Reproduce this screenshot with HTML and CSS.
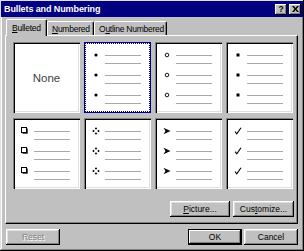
FILE: index.html
```html
<!DOCTYPE html>
<html>
<head>
<meta charset="utf-8">
<link rel="stylesheet" href="styles.css">
</head>
<body>
<div class="window">
  <div class="titlebar">
    <span class="title">Bullets and Numbering</span>
    <div class="tbtns">
      <span class="tbtn help">?</span>
      <span class="tbtn close"><svg width="7" height="6" viewBox="0 0 7 6"><path d="M0 0h2l1.5 2 1.5-2h2L4.5 3 7 6H5L3.5 4 2 6H0l2.5-3z" fill="#000"/></svg></span>
    </div>
  </div>
  <div class="content">
    <div class="tabs">
      <div class="tab sel"><span class="u">B</span>ulleted</div>
      <div class="tab t2"><span class="u">N</span>umbered</div>
      <div class="tab t3">O<span class="u">u</span>tline Numbered</div>
    </div>
    <div class="panel">
      <div class="grid">
        <div class="cell none">None</div>
        <div class="cell selected">
          <div class="item"><svg class="b" width="8" height="8"><circle cx="4" cy="4" r="1.6" fill="#000"/></svg><div class="lines"><i></i><i></i></div></div>
          <div class="item"><svg class="b" width="8" height="8"><circle cx="4" cy="4" r="1.6" fill="#000"/></svg><div class="lines"><i></i><i></i></div></div>
          <div class="item"><svg class="b" width="8" height="8"><circle cx="4" cy="4" r="1.6" fill="#000"/></svg><div class="lines"><i></i><i></i></div></div>
        </div>
        <div class="cell">
          <div class="item"><svg class="b" width="8" height="8"><circle cx="4" cy="4" r="1.8" fill="none" stroke="#000" stroke-width="0.9"/></svg><div class="lines"><i></i><i></i></div></div>
          <div class="item"><svg class="b" width="8" height="8"><circle cx="4" cy="4" r="1.8" fill="none" stroke="#000" stroke-width="0.9"/></svg><div class="lines"><i></i><i></i></div></div>
          <div class="item"><svg class="b" width="8" height="8"><circle cx="4" cy="4" r="1.8" fill="none" stroke="#000" stroke-width="0.9"/></svg><div class="lines"><i></i><i></i></div></div>
        </div>
        <div class="cell">
          <div class="item"><svg class="b" width="8" height="8"><rect x="2.5" y="2.5" width="3" height="3" fill="#000"/></svg><div class="lines"><i></i><i></i></div></div>
          <div class="item"><svg class="b" width="8" height="8"><rect x="2.5" y="2.5" width="3" height="3" fill="#000"/></svg><div class="lines"><i></i><i></i></div></div>
          <div class="item"><svg class="b" width="8" height="8"><rect x="2.5" y="2.5" width="3" height="3" fill="#000"/></svg><div class="lines"><i></i><i></i></div></div>
        </div>
        <div class="cell">
          <div class="item"><svg class="b" width="8" height="8"><rect x="0.5" y="0.5" width="5" height="5" fill="none" stroke="#000"/><path d="M6.5 1.5V6.5H1.5" fill="none" stroke="#555"/></svg><div class="lines"><i></i><i></i></div></div>
          <div class="item"><svg class="b" width="8" height="8"><rect x="0.5" y="0.5" width="5" height="5" fill="none" stroke="#000"/><path d="M6.5 1.5V6.5H1.5" fill="none" stroke="#555"/></svg><div class="lines"><i></i><i></i></div></div>
          <div class="item"><svg class="b" width="8" height="8"><rect x="0.5" y="0.5" width="5" height="5" fill="none" stroke="#000"/><path d="M6.5 1.5V6.5H1.5" fill="none" stroke="#555"/></svg><div class="lines"><i></i><i></i></div></div>
        </div>
        <div class="cell">
          <div class="item"><svg class="b" width="8" height="8"><path d="M4 0.3L5.2 1.5 4 2.7 2.8 1.5zM1.5 2.8L2.7 4 1.5 5.2 0.3 4zM6.5 2.8L7.7 4 6.5 5.2 5.3 4zM4 5.3L5.2 6.5 4 7.7 2.8 6.5z" fill="#000"/></svg><div class="lines"><i></i><i></i></div></div>
          <div class="item"><svg class="b" width="8" height="8"><path d="M4 0.3L5.2 1.5 4 2.7 2.8 1.5zM1.5 2.8L2.7 4 1.5 5.2 0.3 4zM6.5 2.8L7.7 4 6.5 5.2 5.3 4zM4 5.3L5.2 6.5 4 7.7 2.8 6.5z" fill="#000"/></svg><div class="lines"><i></i><i></i></div></div>
          <div class="item"><svg class="b" width="8" height="8"><path d="M4 0.3L5.2 1.5 4 2.7 2.8 1.5zM1.5 2.8L2.7 4 1.5 5.2 0.3 4zM6.5 2.8L7.7 4 6.5 5.2 5.3 4zM4 5.3L5.2 6.5 4 7.7 2.8 6.5z" fill="#000"/></svg><div class="lines"><i></i><i></i></div></div>
        </div>
        <div class="cell">
          <div class="item"><svg class="b" width="8" height="8"><path d="M0.5 0.8L7.5 4 0.5 7.2 2.5 4z" fill="#000"/></svg><div class="lines"><i></i><i></i></div></div>
          <div class="item"><svg class="b" width="8" height="8"><path d="M0.5 0.8L7.5 4 0.5 7.2 2.5 4z" fill="#000"/></svg><div class="lines"><i></i><i></i></div></div>
          <div class="item"><svg class="b" width="8" height="8"><path d="M0.5 0.8L7.5 4 0.5 7.2 2.5 4z" fill="#000"/></svg><div class="lines"><i></i><i></i></div></div>
        </div>
        <div class="cell">
          <div class="item"><svg class="b" width="8" height="8"><path d="M1 4.6L2.8 6.8 7 0.8" stroke="#000" stroke-width="1.1" fill="none"/></svg><div class="lines"><i></i><i></i></div></div>
          <div class="item"><svg class="b" width="8" height="8"><path d="M1 4.6L2.8 6.8 7 0.8" stroke="#000" stroke-width="1.1" fill="none"/></svg><div class="lines"><i></i><i></i></div></div>
          <div class="item"><svg class="b" width="8" height="8"><path d="M1 4.6L2.8 6.8 7 0.8" stroke="#000" stroke-width="1.1" fill="none"/></svg><div class="lines"><i></i><i></i></div></div>
        </div>
      </div>
      <div class="panel-btns">
        <button class="btn pic"><span class="u">P</span>icture...</button>
        <button class="btn cust">Cus<span class="u">t</span>omize...</button>
      </div>
    </div>
    <div class="footer">
      <button class="btn disabled">Reset</button>
      <div class="right">
        <button class="btn default">OK</button>
        <button class="btn">Cancel</button>
      </div>
    </div>
  </div>
</div>
</body>
</html>
```

FILE: styles.css
```css
* { box-sizing: border-box; }
html, body { margin: 0; padding: 0; background: #c0c0c0; }
body { font-family: "Liberation Sans", Arial, sans-serif; font-size: 8.5px; color: #000; }
.window {
  width: 304px; height: 251px; background: #c0c0c0; padding: 1px;
  box-shadow: inset -1px -1px #000, inset 1px 1px #dfdfdf, inset -2px -2px #808080, inset 2px 2px #fff;
}
.titlebar {
  height: 16px; background: #000080; display: flex; align-items: center;
  justify-content: space-between; padding: 0 2px 0 3px;
}
.title { color: #fff; font-weight: bold; font-size: 9px; letter-spacing: -0.1px; }
.tbtns { display: flex; gap: 2px; }
.tbtn {
  width: 12px; height: 11px; background: #c0c0c0; display: flex; align-items: center; justify-content: center;
  box-shadow: inset -1px -1px #000, inset 1px 1px #fff, inset -2px -2px #808080;
  font-weight: bold; font-size: 8.5px; line-height: 1;
}
.content { padding: 2px 5px 0 4px; }
.tabs { display: flex; align-items: flex-end; height: 16px; padding-left: 1px; }
.tab {
  height: 14px; border-top: 1px solid #fff; border-left: 1px solid #fff; border-right: 1px solid #000;
  box-shadow: inset -1px 0 #808080; border-radius: 2px 2px 0 0;
  display: flex; align-items: center; padding-left: 4px; letter-spacing: -0.25px; white-space: nowrap;
}
.tab.sel { width: 41px; height: 17px; margin-bottom: -1px; position: relative; z-index: 1; background: #c0c0c0; padding-left: 5px; }
.tab.t2 { width: 47px; }
.tab.t3 { width: 73px; }
.u { text-decoration: underline; }
.panel {
  height: 189px; border-top: 1px solid #fff; border-left: 1px solid #fff;
  border-right: 1px solid #000; border-bottom: 1px solid #000;
  box-shadow: inset -1px -1px #808080; padding: 6px 0 0 7px;
}
.grid { display: grid; grid-template-columns: repeat(4, 67px); grid-template-rows: 71px 71px; column-gap: 4px; row-gap: 5px; }
.cell {
  background: #fff; display: flex; flex-direction: column; padding: 9px 0 0 8px;
  box-shadow: inset 1px 1px #808080, inset 2px 2px #000, inset -1px -1px #fff, inset -2px -2px #dfdfdf;
}
.cell.none { align-items: center; justify-content: center; padding: 0; font-size: 11.5px; color: #404040; }
.cell.selected { box-shadow: inset 0 0 0 1px #000080; outline: 1px dotted #000080; outline-offset: -2px; }
.item { display: flex; height: 20px; }
.b { flex: none; }
.lines { margin: 4px 0 0 5px; display: flex; flex-direction: column; gap: 7px; }
.lines i { display: block; width: 36px; height: 1px; background: #a8a8a8; }
.panel-btns { display: flex; justify-content: flex-end; gap: 3px; margin-top: 12px; padding-right: 3px; }
.btn {
  height: 16px; border: none; background: #c0c0c0; font: inherit; color: #000; padding: 0;
  box-shadow: inset -1px -1px #000, inset 1px 1px #fff, inset -2px -2px #808080, inset 2px 2px #dfdfdf;
}
.btn.pic { width: 60px; }
.btn.cust { width: 61px; }
.footer { display: flex; justify-content: space-between; margin-top: 5px; padding-left: 1px; }
.footer .btn { width: 54px; }
.right { display: flex; gap: 2px; }
.btn.default { border: 1px solid #000; box-shadow: inset -1px -1px #000, inset 1px 1px #fff, inset -2px -2px #808080; }
.btn.disabled { color: #808080; text-shadow: 1px 1px #fff; }
```
